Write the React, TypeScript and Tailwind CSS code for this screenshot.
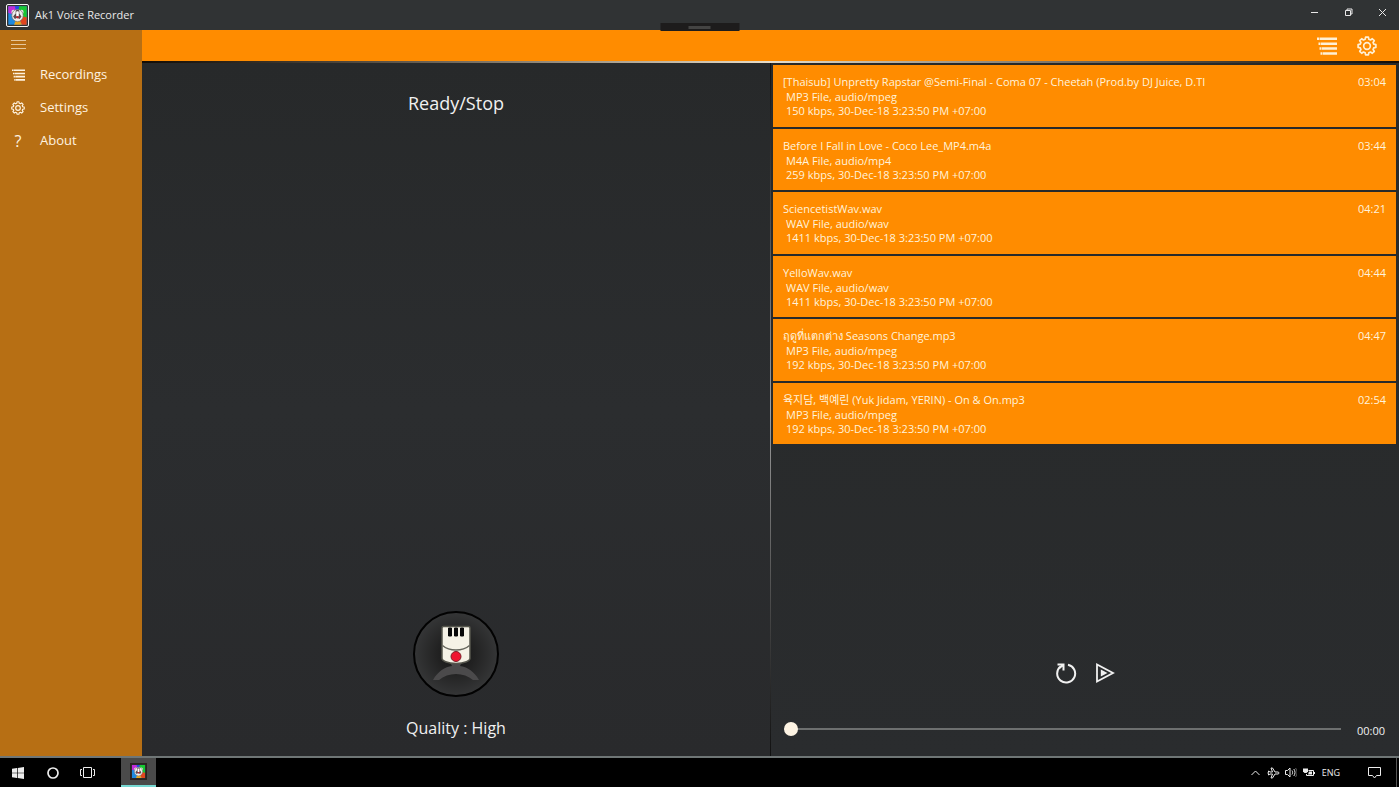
import { useState } from 'react';

const recordings = [
  { title: '[Thaisub] Unpretty Rapstar @Semi-Final - Coma 07 - Cheetah (Prod.by DJ Juice, D.TI', type: 'MP3 File, audio/mpeg', info: '150 kbps, 30-Dec-18 3:23:50 PM +07:00', length: '03:04' },
  { title: 'Before I Fall in Love - Coco Lee_MP4.m4a', type: 'M4A File, audio/mp4', info: '259 kbps, 30-Dec-18 3:23:50 PM +07:00', length: '03:44' },
  { title: 'SciencetistWav.wav', type: 'WAV File, audio/wav', info: '1411 kbps, 30-Dec-18 3:23:50 PM +07:00', length: '04:21' },
  { title: 'YelloWav.wav', type: 'WAV File, audio/wav', info: '1411 kbps, 30-Dec-18 3:23:50 PM +07:00', length: '04:44' },
  { title: 'ฤดูที่แตกต่าง Seasons Change.mp3', type: 'MP3 File, audio/mpeg', info: '192 kbps, 30-Dec-18 3:23:50 PM +07:00', length: '04:47' },
  { title: '육지담, 백예린 (Yuk Jidam, YERIN) - On & On.mp3', type: 'MP3 File, audio/mpeg', info: '192 kbps, 30-Dec-18 3:23:50 PM +07:00', length: '02:54' },
];

// eight-tooth cog outline around (12, 12)
const cogPoints = Array.from({ length: 8 }, (_, i) => {
  const at = (radius: number, degrees: number) => {
    const a = ((i * 45 + degrees) * Math.PI) / 180;
    return `${(12 + radius * Math.cos(a)).toFixed(2)},${(12 + radius * Math.sin(a)).toFixed(2)}`;
  };
  return [at(8.4, -15), at(10.8, -9), at(10.8, 9), at(8.4, 15)].join(' ');
}).join(' ');

function CogIcon({ className }: { className: string }) {
  return (
    <svg viewBox="0 0 24 24" className={className} fill="none" stroke="currentColor" strokeWidth="2" strokeLinejoin="round" aria-hidden="true">
      <polygon points={cogPoints} />
      <circle cx="12" cy="12" r="4" />
    </svg>
  );
}

function ListIcon({ className }: { className: string }) {
  return (
    <svg viewBox="0 0 20 18" className={className} fill="currentColor" aria-hidden="true">
      <path d="M0 .5h2.500v2.500H0zM3 .5h17v2.500H3zM1.500 5.500h2v2.500h-2zM4 5.500h16v2.500H4zM2.500 10.300h2v2.500h-2zM5 10.300h15v2.500H5zM3.500 15.200h2v2.500h-2zM6 15.200h14v2.500H6z" />
    </svg>
  );
}

function AppLogo({ className }: { className: string }) {
  return (
    <svg viewBox="0 0 24 24" className={className} aria-hidden="true">
      <rect x="1.500" y="1.500" width="21" height="21" fill="#1e8ae0" />
      <path d="M1.500 1.500H9L12 12 1.500 9z" fill="#c32bd8" />
      <path d="M9 1.500h6L12 12z" fill="#2746e8" />
      <path d="M14 1.500h8.500V15L12 12z" fill="#18c832" />
      <path d="M22.500 14v8.500H17L12 12z" fill="#e2461e" />
      <path d="M17 22.500H8L12 12z" fill="#e8a51e" />
      <circle cx="7.500" cy="8" r="2.500" fill="#e3e3e3" />
      <circle cx="16.500" cy="8" r="2.500" fill="#e3e3e3" />
      <ellipse cx="12" cy="12" rx="6.500" ry="7" fill="#ededed" stroke="#77706f" strokeWidth=".8" />
      <path d="M12 5.500c2 0 2.500 2 2 4l2.500 3.500-2 3-3-1.500L9 16l-2-3 3-3.500c-.5-2 0-4 2-4z" fill="#5c4a4c" />
      <rect x="10.500" y="7" width="3" height="6" rx="1" fill="#fff" />
      <circle cx="12" cy="14" r="1.300" fill="#d41f2c" />
    </svg>
  );
}

function TitleBar() {
  return (
    <header className="flex h-[30px] shrink-0 items-center bg-[#303334] text-[#e9e9e9]">
      <div className="ml-[6px] h-[23px] w-[23px] rounded-xs border border-[#f5f5f5]">
        <AppLogo className="h-full w-full" />
      </div>
      <h1 className="ml-[6px] text-[11px]">Ak1 Voice Recorder</h1>
      <div className="ml-auto flex h-full items-center pb-[6px]">
        <button aria-label="Minimize" className="flex w-[33px] justify-center">
          <svg viewBox="0 0 9 9" className="h-[9px] w-[9px]" stroke="currentColor"><path d="M1 4.500h7" /></svg>
        </button>
        <button aria-label="Restore" className="flex w-[34px] justify-center">
          <svg viewBox="0 0 9 9" className="h-[9px] w-[9px]" fill="none" stroke="currentColor"><path d="M1.500 2.500h5v5h-5zM3 2.500V1h5v5H6.500" /></svg>
        </button>
        <button aria-label="Close" className="flex w-[34px] justify-center">
          <svg viewBox="0 0 9 9" className="h-[9px] w-[9px]" stroke="currentColor"><path d="M1 1l7 7M8 1L1 8" /></svg>
        </button>
      </div>
    </header>
  );
}

function Sidebar() {
  return (
    <nav className="flex w-[142px] shrink-0 flex-col bg-[#b76f14] text-[#fff3e0]">
      <button aria-label="Menu" className="flex h-7 items-center pl-[11px]">
        <svg viewBox="0 0 15 9" className="h-[9px] w-[15px]" stroke="#e6c79c"><path d="M0 .5h15M0 4.500h15M0 8.500h15" /></svg>
      </button>
      <a href="#recordings" className="flex h-[33px] items-center text-[13px]">
        <span className="flex w-9 justify-center"><ListIcon className="h-3 w-[13px]" /></span>
        <span className="ml-1">Recordings</span>
      </a>
      <a href="#settings" className="flex h-[33px] items-center text-[13px]">
        <span className="flex w-9 justify-center"><CogIcon className="h-[14px] w-[14px]" /></span>
        <span className="ml-1">Settings</span>
      </a>
      <a href="#about" className="flex h-[33px] items-center text-[13px]">
        <span className="flex w-9 justify-center text-[16px]">?</span>
        <span className="ml-1">About</span>
      </a>
    </nav>
  );
}

function MicIcon() {
  return (
    <svg viewBox="0 0 86 86" className="h-[86px] w-[86px]" aria-hidden="true">
      <defs>
        <radialGradient id="mic-shade">
          <stop offset="0" stopColor="#151515" />
          <stop offset=".45" stopColor="#222222" />
          <stop offset="1" stopColor="#353637" />
        </radialGradient>
      </defs>
      <circle cx="43" cy="43" r="42" fill="url(#mic-shade)" stroke="#020202" strokeWidth="2" />
      <path d="M20 69c5-9 12-13 19-14l-2-4h12l-2 4c7 1 14 5 19 14h-6c-9-8-25-8-34 0z" fill="#4b4a4b" />
      <path d="M30.500 15.500h25a1.500 1.500 0 0 1 1.500 1.500v30.500c0 2-5 5-14 5s-14-3-14-5V17a1.500 1.500 0 0 1 1.500-1.500z" fill="#f5f2e6" stroke="#55554c" strokeWidth="1.500" />
      <path d="M29.500 34.500c7 6 20 6 27 0" fill="none" stroke="#65655c" strokeWidth="1.500" />
      <path d="M35.500 17v8h3v-8zM41.500 17v8h3v-8zM47.500 17v8h3v-8z" fill="#080808" stroke="#080808" strokeLinejoin="round" />
      <circle cx="43" cy="45.500" r="5" fill="#f0142f" stroke="#7a2029" />
    </svg>
  );
}

function RecorderPanel() {
  return (
    <section className="flex flex-col items-center bg-linear-to-b from-[#27292a] via-[#2b2d2f] to-[#292a2c] pt-7 pb-4 text-[#f1f1f1]">
      <h2 className="text-[18px] leading-6">Ready/Stop</h2>
      <button aria-label="Record" className="mt-auto rounded-full">
        <MicIcon />
      </button>
      <p className="mt-[19px] text-[16px] leading-6">Quality : High</p>
    </section>
  );
}

function PlayerPanel() {
  const [position, setPosition] = useState(0);

  return (
    <section className="flex min-w-0 flex-col bg-linear-to-b from-[#272929] to-[#2a2c2e] pt-[2px] pr-[3px] pl-[2px]">
      <ul className="grid min-h-[379px] auto-rows-fr gap-[2px]">
        {recordings.map((item) => (
          <li key={item.title} className="flex justify-between bg-[#ff8c00] px-[10px] pt-[9px] text-[11px] leading-[15px] text-[#fff3dc]">
            <div>
              <h3>{item.title}</h3>
              <p className="pl-[3px]">{item.type}</p>
              <p className="pl-[3px] leading-[14px]">{item.info}</p>
            </div>
            <time>{item.length}</time>
          </li>
        ))}
      </ul>
      <div className="mt-auto flex items-center justify-center gap-[18px] text-[#f1f1f1]">
        <button aria-label="Repeat">
          <svg viewBox="0 0 22 22" className="h-[22px] w-[22px]" fill="none" stroke="currentColor" strokeWidth="2">
            <path d="M13 2.700A9 9 0 1 1 5.500 4.500M2.500 2.500h6v6M8.500 2.500L4.500 6" />
          </svg>
        </button>
        <button aria-label="Play">
          <svg viewBox="0 0 20 22" className="h-[22px] w-5" fill="none" stroke="currentColor" strokeWidth="1.800">
            <path d="M2 2.500v17L18 11z" />
            <path d="M5.800 7.500v7l6.700-3.500z" fill="currentColor" stroke="none" />
          </svg>
        </button>
      </div>
      <div className="mt-[30px] mb-3 flex h-[30px] items-center pr-[11px] pl-[11px]">
        <input
          type="range"
          aria-label="Position"
          min={0}
          max={100}
          value={position}
          onChange={(e) => setPosition(Number(e.target.value))}
          className="h-4 min-w-0 flex-1 appearance-none bg-transparent [&::-webkit-slider-runnable-track]:h-[2px] [&::-webkit-slider-runnable-track]:bg-[#6d6f6f] [&::-webkit-slider-thumb]:-mt-[6px] [&::-webkit-slider-thumb]:h-[14px] [&::-webkit-slider-thumb]:w-[14px] [&::-webkit-slider-thumb]:appearance-none [&::-webkit-slider-thumb]:rounded-full [&::-webkit-slider-thumb]:bg-[#fdf3e3]"
        />
        <time className="ml-4 pt-1 text-[11px] text-[#f1f1f1]">00:00</time>
      </div>
    </section>
  );
}

function Taskbar() {
  return (
    <footer className="flex h-[29px] shrink-0 items-stretch bg-black text-[#ededed]">
      <button aria-label="Start" className="flex w-[35px] items-center justify-center">
        <svg viewBox="0 0 12 12" className="h-3 w-3" fill="currentColor"><path d="M0 1.700l5-.7v4.700H0zM5.700.9L12 0v5.700H5.700zM0 6.300h5V11l-5-.7zM5.700 6.300H12V12l-6.300-.9z" /></svg>
      </button>
      <button aria-label="Search" className="flex w-[35px] items-center justify-center">
        <svg viewBox="0 0 12 12" className="h-3 w-3" fill="none" stroke="currentColor" strokeWidth="1.700"><circle cx="6" cy="6" r="5" /></svg>
      </button>
      <button aria-label="Task view" className="flex w-[35px] items-center justify-center">
        <svg viewBox="0 0 15 11" className="h-[11px] w-[15px]" fill="none" stroke="currentColor"><path d="M3.500.5h8v10h-8zM2 2.500H.5v6H2M13 2.500h1.500v6H13" /></svg>
      </button>
      <button aria-label="Ak1 Voice Recorder" className="ml-4 flex w-[35px] items-center justify-center border-b-2 border-[#76d8d2] bg-[#4a4a4a]">
        <span className="h-[17px] w-[17px] bg-[#2b2420] p-px"><AppLogo className="h-full w-full" /></span>
      </button>
      <div className="ml-auto flex items-center">
        <svg viewBox="0 0 9 6" className="h-[6px] w-[9px]" fill="none" stroke="currentColor"><path d="M.5 5L4.500 1l4 4" /></svg>
        <svg viewBox="0 0 13 12" className="ml-[7px] h-3 w-[13px]" fill="none" stroke="currentColor"><path d="M1.500 4L3 5h2.500L4 1h1.500L8 5h3c1.300 0 1.300 2 0 2H8l-2.500 4H4l1.500-4H3L1.500 8V6.500L.7 6l.8-.5z" /></svg>
        <svg viewBox="0 0 12 11" className="ml-[5px] h-[11px] w-3" fill="none" stroke="currentColor"><path d="M.5 3.500h2L5 1v9L2.500 7.500h-2z" /><path d="M7 3.500c.8 1 .8 3 0 4M8.800 2c1.600 2 1.600 5 0 7" /><path d="M10.500 1c2 3 2 6 0 9" stroke="#666" /></svg>
        <svg viewBox="0 0 12 10" className="ml-[6px] h-[10px] w-3" fill="none" stroke="currentColor"><path d="M5.500 2.500h5v5h-7V6" /><path d="M6 3.500h3v3H5z" fill="currentColor" stroke="none" /><path d="M0 .5h5v3l-1.500 1.500h-2L0 3.500z" fill="currentColor" stroke="none" /><path d="M11.500 4v2" /></svg>
        <span className="ml-[7px] text-[9px]">ENG</span>
        <button aria-label="Notifications" className="ml-7 mr-[15px]">
          <svg viewBox="0 0 13 12" className="h-3 w-[13px]" fill="none" stroke="currentColor"><path d="M.5.5h12v8h-4l-2 2.500-2-2.500h-4z" /></svg>
        </button>
        <span className="mr-[2px] h-full w-px bg-[#555]" />
      </div>
    </footer>
  );
}

export default function App() {
  return (
    <div className="relative flex h-screen flex-col overflow-hidden bg-[#292b2c] font-['Open_Sans','Noto_Sans_CJK_KR',sans-serif]">
      <TitleBar />
      <div className="absolute top-[23px] left-1/2 flex h-2 w-[79px] -translate-x-1/2 items-center justify-center bg-[#1d1c1c]">
        <span className="h-[3px] w-[22px] bg-[#444443]" />
      </div>
      <div className="flex min-h-0 flex-1">
        <Sidebar />
        <main className="flex min-w-0 flex-1 flex-col">
          <div className="flex h-[31px] shrink-0 items-center justify-end bg-[#ff8c00] pr-[22px] text-[#fff0d5]">
            <button aria-label="Recordings" className="mr-5"><ListIcon className="h-[18px] w-5" /></button>
            <button aria-label="Settings"><CogIcon className="h-5 w-5" /></button>
          </div>
          <div className="h-[2px] shrink-0 bg-linear-to-r from-[#140d06] via-[#e8ddc8] to-[#140d06]" />
          <div className="grid min-h-0 flex-1 grid-cols-[1fr_auto_1fr]">
            <RecorderPanel />
            <div className="w-px bg-linear-to-b from-[#111] via-[#a0a0a0] to-[#111]" />
            <PlayerPanel />
          </div>
        </main>
      </div>
      <div className="h-[2px] shrink-0 bg-[#6f7676]" />
      <Taskbar />
    </div>
  );
}
